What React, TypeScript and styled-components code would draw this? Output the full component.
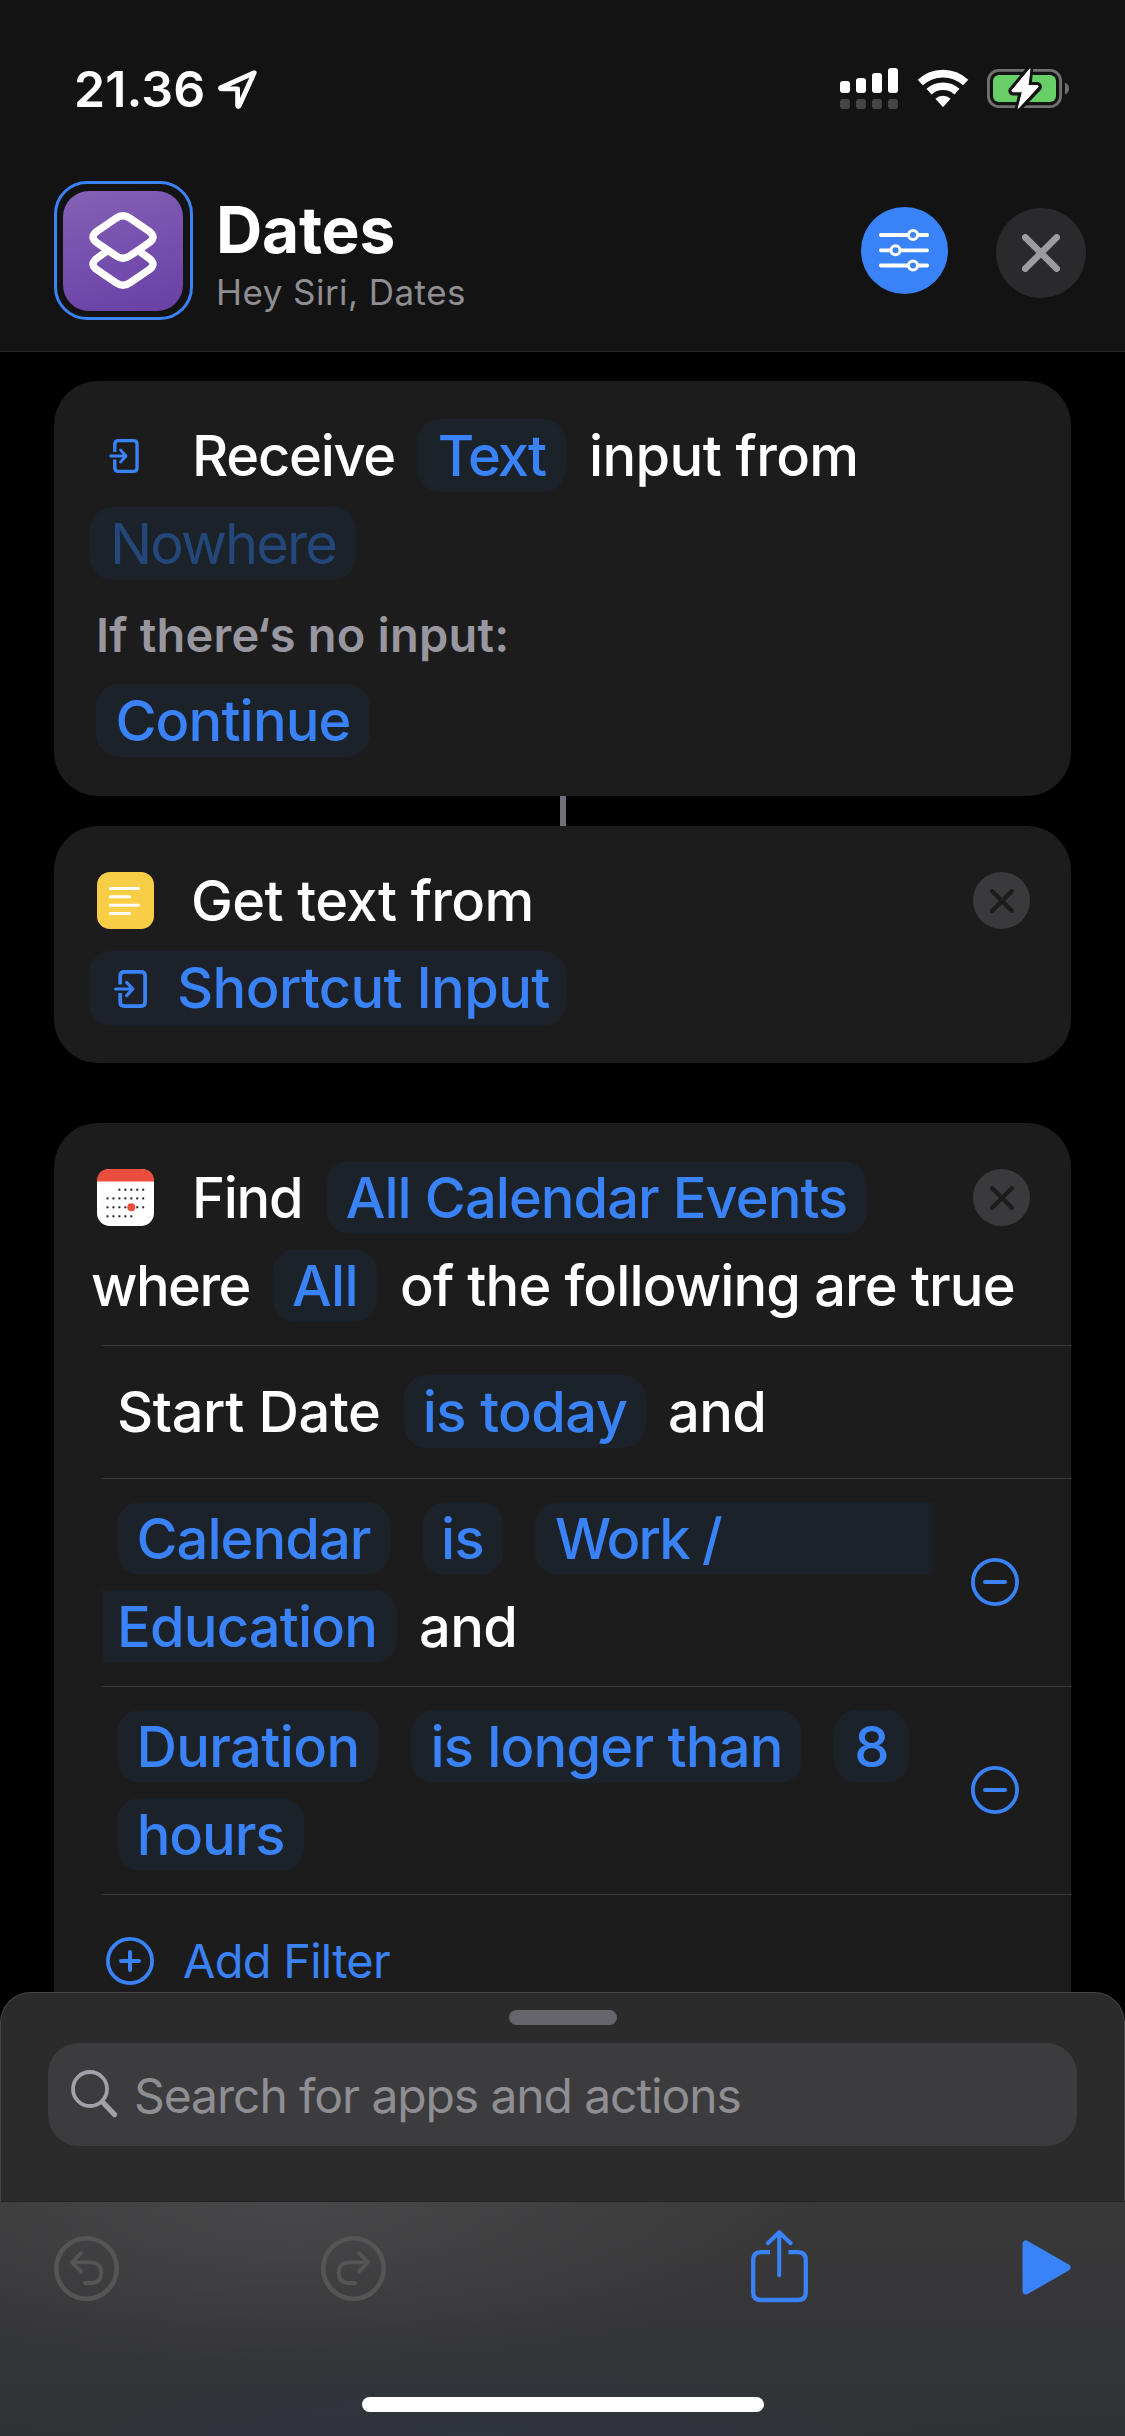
import React from "react";
import styled, { createGlobalStyle, css } from "styled-components";

const BLUE = "#3a82f7";
const PILL = "#1c222a";
const CARD = "#1c1c1c";

const Global = createGlobalStyle`
  *, *::before, *::after { box-sizing: border-box; }
  html, body { margin: 0; padding: 0; background: #000; }
  body { font-family: Inter, "Liberation Sans", sans-serif; color: #fff; }
  svg { display: block; flex: none; }
  button { border: 0; padding: 0; background: none; font: inherit; color: inherit; }
`;

const Phone = styled.div`
  width: 1125px;
  height: 2436px;
  display: flex;
  flex-direction: column;
  overflow: hidden;
  background: #000;
`;

/* ---------- header ---------- */

const Header = styled.header`
  flex: none;
  height: 352px;
  background: #131313;
  border-bottom: 1px solid #29292a;
`;

const StatusBar = styled.div`
  height: 181px;
  padding: 60px 56px 0 74px;
  display: flex;
  align-items: flex-start;
`;

const Clock = styled.div`
  width: 144px;
  height: 57px;
  font-size: 50px;
  line-height: 58px;
  font-weight: 600;
  letter-spacing: 0.1px;
  white-space: nowrap;
`;

const LocationSlot = styled.div`
  padding-top: 10px;
`;

const StatusIcons = styled.div`
  margin-left: auto;
  padding-top: 8px;
  display: flex;
`;

const TitleBar = styled.div`
  height: 139px;
  padding: 0 39px 0 54px;
  display: flex;
  align-items: flex-start;
`;

const AppIcon = styled.div`
  flex: none;
  width: 139px;
  height: 139px;
  border: 3px solid ${BLUE};
  border-radius: 33px;
  padding: 7px 0 0 6px;
`;

const AppIconFace = styled.div`
  width: 120px;
  height: 120px;
  border-radius: 26px;
  background: linear-gradient(165deg, #8461b5 0%, #7650ae 50%, #693fa5 100%);
`;

const Titles = styled.div`
  margin-left: 23px;
  white-space: nowrap;
`;

const Title = styled.h1`
  margin: 11px 0 0;
  font-size: 64px;
  line-height: 76px;
  font-weight: 700;
  letter-spacing: -0.2px;
`;

const Subtitle = styled.div`
  margin: 3px 0 0;
  font-size: 35px;
  line-height: 42px;
  color: #8e8e93;
  letter-spacing: 0.45px;
`;

const RoundButton = styled.button<{ $size: number; $bg: string; $mt?: number; $ml?: string }>`
  flex: none;
  width: ${(p) => p.$size}px;
  height: ${(p) => p.$size}px;
  margin-top: ${(p) => p.$mt ?? 0}px;
  margin-left: ${(p) => p.$ml ?? "0"};
  border-radius: 50%;
  background: ${(p) => p.$bg};
  display: flex;
  align-items: center;
  justify-content: center;
`;

/* ---------- editor ---------- */

const Editor = styled.main`
  flex: none;
  height: 1640px;
  padding: 29px 54px 0;
  overflow: hidden;
  display: flex;
  flex-direction: column;
`;

const Card = styled.section<{ $h: number; $mt?: number }>`
  flex: none;
  height: ${(p) => p.$h}px;
  margin-top: ${(p) => p.$mt ?? 0}px;
  padding-top: 38px;
  border-radius: 44px;
  background: ${CARD};
`;

const Connector = styled.div`
  flex: none;
  align-self: center;
  width: 6px;
  height: 30px;
  background: #6f717a;
`;

const Line = styled.div<{ $x: number; $mt?: number }>`
  display: flex;
  align-items: center;
  height: 73px;
  margin-top: ${(p) => p.$mt ?? 0}px;
  padding: 0 41px 0 ${(p) => p.$x}px;
`;

const wording = css`
  flex: none;
  height: 73px;
  font-size: 56px;
  line-height: 74px;
  font-weight: 500;
  letter-spacing: -0.6px;
  white-space: nowrap;
`;

const Words = styled.span<{ $w: number; $ml?: number; $ls?: number }>`
  ${wording}
  width: ${(p) => p.$w}px;
  margin-left: ${(p) => p.$ml ?? 0}px;
  letter-spacing: ${(p) => p.$ls ?? -0.6}px;
`;

type PillProps = { $w: number; $ml?: number; $dim?: boolean; $ls?: number; $open?: "left" | "right" };

const Pill = styled.span<PillProps>`
  ${wording}
  width: ${(p) => p.$w}px;
  margin-left: ${(p) => p.$ml ?? 0}px;
  border-radius: 23px;
  background: ${PILL};
  color: ${(p) => (p.$dim ? "#234779" : BLUE)};
  font-weight: ${(p) => (p.$dim ? 400 : 500)};
  letter-spacing: ${(p) => p.$ls ?? -0.6}px;
  text-align: center;
  ${(p) =>
    p.$open === "right" &&
    css`
      border-radius: 23px 0 0 23px;
      padding-left: 20px;
      text-align: left;
      background: linear-gradient(90deg, ${PILL} 0, ${PILL} calc(100% - 12px), ${CARD} 100%);
    `}
  ${(p) =>
    p.$open === "left" &&
    css`
      border-radius: 0 23px 23px 0;
      padding-left: 15px;
      text-align: left;
    `}
`;

const VariablePill = styled.span`
  flex: none;
  width: 477px;
  height: 75px;
  padding: 0 0 0 25px;
  border-radius: 22px;
  background: #1d2129;
  color: ${BLUE};
  display: flex;
  align-items: center;
`;

const VariableName = styled.span`
  ${wording}
  line-height: 72px;
  margin-left: 30px;
`;

const IconSlot = styled.span<{ $ml: number; $w: number }>`
  flex: none;
  margin-left: ${(p) => p.$ml}px;
  width: ${(p) => p.$w}px;
`;

const Question = styled.div`
  margin: 26px 0 21px 42px;
  height: 57px;
  font-size: 47px;
  line-height: 57px;
  font-weight: 600;
  color: #98969f;
  white-space: nowrap;
  letter-spacing: 0.2px;
`;

const Filters = styled.div`
  margin: 23px 0 0 48px;
`;

const Filter = styled.div<{ $h: number; $pt: number }>`
  height: ${(p) => p.$h}px;
  padding-top: ${(p) => p.$pt}px;
  border-top: 1px solid #3b3b3d;
  display: flex;
  align-items: flex-start;
`;

const FilterLines = styled.div`
  flex: none;
  width: 869px;
`;

const RemoveButton = styled.button`
  height: 48px;
  margin-top: 56px;
`;

const AddFilter = styled.button`
  display: flex;
  align-items: center;
  margin: 36px 0 0 4px;
  height: 60px;
  color: ${BLUE};
`;

const AddLabel = styled.span`
  margin-left: 29px;
  font-size: 47px;
  line-height: 58px;
  letter-spacing: -0.75px;
`;

/* ---------- bottom sheet ---------- */

const Sheet = styled.section`
  flex: none;
  height: 210px;
  border: 1px solid #474749;
  border-bottom-color: #232324;
  border-radius: 31px 31px 0 0;
  background: #2b2b2b;
  display: flex;
  flex-direction: column;
  align-items: center;
`;

const Grabber = styled.div`
  width: 108px;
  height: 15px;
  margin-top: 17px;
  border-radius: 8px;
  background: #66656b;
`;

const SearchField = styled.div`
  width: 1029px;
  height: 103px;
  margin-top: 18px;
  padding-left: 23px;
  border-radius: 31px;
  background: #3c3c3e;
  display: flex;
  align-items: center;
`;

const Placeholder = styled.span`
  margin: 2px 0 0 15px;
  font-size: 48px;
  line-height: 58px;
  letter-spacing: -1.1px;
  color: #8e8e93;
  white-space: nowrap;
`;

const Toolbar = styled.footer`
  flex: none;
  height: 234px;
  padding: 28px 54px 0;
  background:
    radial-gradient(ellipse 560px 100px at 42% 100%, rgba(47, 52, 64, 0.8), rgba(47, 52, 64, 0) 100%),
    radial-gradient(ellipse 520px 170px at 26% 0%, rgba(74, 74, 76, 0.85), rgba(74, 74, 76, 0) 100%),
    linear-gradient(180deg, #39393a 0%, #313234 100%);
  display: flex;
  flex-direction: column;
`;

const Tools = styled.div`
  height: 73px;
  display: flex;
  align-items: center;
`;

const Tool = styled.button<{ $ml?: number; $pt?: number }>`
  flex: none;
  margin-left: ${(p) => p.$ml ?? 0}px;
  padding-top: ${(p) => p.$pt ?? 0}px;
`;

const HomeIndicator = styled.div`
  align-self: center;
  width: 402px;
  height: 15px;
  margin-top: 94px;
  border-radius: 8px;
  background: #fff;
`;

/* ---------- icons ---------- */

const LocationIcon = () => (
  <svg width="40" height="40" viewBox="0 0 40 40">
    <path d="M36.2 2.8 2.8 17.7Q2 18.6 3.3 18.9H19.6V35.6Q20.2 37.2 21.2 35.8Z" fill="none" stroke="#fff" strokeWidth="4.8" strokeLinejoin="round" />
  </svg>
);

const signal = [12, 15, 20, 25];

const SignalIcon = () => (
  <svg width="77" height="42" viewBox="0 0 77 42">
    {signal.map((h, i) => (
      <g key={h}>
        <rect x={i * 16} y={25 - h} width="10" height={h} rx="3" fill="#fff" />
        <rect x={i * 16} y="31" width="10" height="10" rx="3" fill="#454545" />
      </g>
    ))}
  </svg>
);

const WifiIcon = () => (
  <svg width="70" height="40" viewBox="0 -2 70 40">
    <g fill="none" stroke="#fff" strokeWidth="7.6">
      <path d="M3.3 12.6A33.2 33.2 0 0 1 48.7 12.6" />
      <path d="M12 21.6A20.8 20.8 0 0 1 40 21.6" />
    </g>
    <path d="M18.4 28.8A11.3 11.3 0 0 1 33.6 28.8L26.6 36.4Q26 37 25.4 36.4Z" fill="#fff" />
  </svg>
);

const BatteryIcon = () => (
  <svg width="82" height="42" viewBox="0 0 82 42">
    <rect x="1.4" y="2.4" width="72.2" height="36.2" rx="10.5" fill="none" stroke="#707070" strokeWidth="2.8" />
    <rect x="6" y="7" width="63" height="27" rx="6" fill="#68ce67" />
    <path d="M78 14.5Q82 16.5 82 20.5T78 26.5Z" fill="#707070" />
    <path d="M43 .5 24.6 22.5Q24.4 24 26 24.2H35L31 41 51.4 19.8Q52 18 50.4 17.2H41.4Z" fill="#fff" stroke="#131313" strokeWidth="6.5" strokeLinejoin="round" />
    <path d="M43 .8 25 22.4Q24.6 23.6 26 23.8H35.4L31.2 40.4 51 19Q51.6 17.8 50.4 17.6H41Z" fill="#fff" stroke="#fff" strokeWidth="1" strokeLinejoin="round" />
  </svg>
);

const ShortcutsGlyph = () => (
  <svg width="120" height="120" viewBox="0 0 120 120" fill="none" stroke="#fff" strokeWidth="7.4">
    <path d="M53 27.2Q60 22.2 67 27.2L86 40.2Q94 46 86 51.8L67 64.8Q60 69.8 53 64.8L34 51.8Q26 46 34 40.2Z" />
    <path d="M43 60.8 34 67.2Q26 73 34 78.8L53 91.8Q60 96.8 67 91.8L86 78.8Q94 73 86 67.2L77 60.8" />
  </svg>
);

const sliders = [
  { y: 6, x: 34 },
  { y: 21.3, x: 16.5 },
  { y: 36.5, x: 34 },
];

const SlidersIcon = () => (
  <svg width="51" height="43" viewBox="0 0 51 43">
    {sliders.map((s) => (
      <g key={s.y} stroke="#fff" strokeLinecap="round">
        <path d={`M1.8 ${s.y}H48.2`} strokeWidth="3.8" />
        <circle cx={s.x} cy={s.y} r="4.5" fill={BLUE} strokeWidth="3" />
      </g>
    ))}
  </svg>
);

const CrossIcon = ({ size, width, color }: { size: number; width: number; color: string }) => {
  const a = width / 2;
  const b = size - a;
  return (
    <svg width={size} height={size}>
      <path d={`M${a} ${a}L${b} ${b}M${b} ${a}L${a} ${b}`} stroke={color} strokeWidth={width} strokeLinecap="round" />
    </svg>
  );
};

const InputIcon = ({ width, height }: { width: number; height: number }) => (
  <svg width={width} height={height} viewBox="0 0 33 38" fill="none" stroke={BLUE} strokeWidth="3.7">
    <path d="M6.2 14.6V6Q6.2 1.9 10.3 1.9H27Q31.1 1.9 31.1 6V32Q31.1 36.1 27 36.1H10.3Q6.2 36.1 6.2 32V23" />
    <path d="M1.6 19H18.4M12.6 12.4 18.8 19 12.6 25.6" strokeWidth="3.2" strokeLinecap="round" strokeLinejoin="round" />
  </svg>
);

const TextIcon = () => (
  <svg width="57" height="57" viewBox="0 0 57 57">
    <rect width="57" height="57" rx="13" fill="#f7ce46" />
    <path d="M13.3 16.5H41.4M13.3 24.7H32.6M13.3 33.2H41.4M13.3 41.6H32.6" stroke="#fff" strokeWidth="3" strokeLinecap="round" />
  </svg>
);

const weeks = [
  { y: 20.7, from: 2, to: 6 },
  { y: 29.4, from: 0, to: 6 },
  { y: 38.3, from: 0, to: 6 },
  { y: 47.3, from: 0, to: 4 },
];

const CalendarIcon = () => (
  <svg width="57" height="57" viewBox="0 0 57 57">
    <rect width="57" height="57" rx="13" fill="#fff" />
    <path d="M0 12.6Q0 0 13 0H44Q57 0 57 12.6Z" fill="#eb4e3d" />
    {weeks.map((w) =>
      Array.from({ length: w.to - w.from + 1 }, (_, i) => (
        <rect key={`${w.y}-${i}`} x={9.5 + (w.from + i) * 5.95} y={w.y - 1} width="2" height="2" fill="#222" />
      ))
    )}
    <circle cx="34.3" cy="38.3" r="4" fill="#eb4e3d" />
  </svg>
);

const CircleSign = ({ plus }: { plus?: boolean }) => (
  <svg width="48" height="48" viewBox="0 0 48 48" fill="none" stroke={BLUE} strokeLinecap="round">
    <circle cx="24" cy="24" r="22.1" strokeWidth="3.8" />
    <path d={plus ? "M15 24H33M24 15V33" : "M14 24H34"} strokeWidth="4" />
  </svg>
);

const SearchIcon = () => (
  <svg width="48" height="50" viewBox="0 0 48 50" fill="none" stroke="#a2a1a8" strokeLinecap="round">
    <circle cx="19" cy="19" r="17" strokeWidth="3.8" />
    <path d="M31.3 31.8 43.6 44.6" strokeWidth="5.2" />
  </svg>
);

const HistoryIcon = ({ flip }: { flip?: boolean }) => (
  <svg width="65" height="65" viewBox="0 0 65 65" fill="none" stroke="#555556" strokeLinecap="round" strokeLinejoin="round">
    <circle cx="32.5" cy="32.5" r="30.2" strokeWidth="4.6" />
    <path transform={flip ? "translate(65 0) scale(-1 1)" : undefined} d="M27 17.2 18 26.4 27 35.6M18.6 26.4H36.6Q47.2 26.4 47.2 36.7T36.6 47H31" strokeWidth="3.9" />
  </svg>
);

const ShareIcon = () => (
  <svg width="57" height="73" viewBox="0 0 57 73" fill="none" stroke={BLUE} strokeWidth="4.3">
    <path d="M19 22.2H10.2Q2.2 22.2 2.2 30.2V62.4Q2.2 70 10.2 70H46.8Q54.8 70 54.8 62.4V30.2Q54.8 22.2 46.8 22.2H37.4" />
    <path d="M28.2 2.8V45.2M16.8 13.2 28.2 2.2 39.6 13.2" strokeWidth="4" strokeLinecap="round" strokeLinejoin="round" />
  </svg>
);

const PlayIcon = () => (
  <svg width="49" height="55" viewBox="0 0 49 55">
    <path d="M4 4V51L45 27.5Z" fill={BLUE} stroke={BLUE} strokeWidth="7" strokeLinejoin="round" />
  </svg>
);

/* ---------- screen ---------- */

const DeleteAction = () => (
  <RoundButton $size={57} $bg="#3a3a3c" $ml="auto" aria-label="Remove action">
    <CrossIcon size={24} width={4.4} color={CARD} />
  </RoundButton>
);

const RemoveFilter = () => (
  <RemoveButton aria-label="Remove filter">
    <CircleSign />
  </RemoveButton>
);

export default function App() {
  return (
    <Phone>
      <Global />
      <Header>
        <StatusBar>
          <Clock>21.36</Clock>
          <LocationSlot>
            <LocationIcon />
          </LocationSlot>
          <StatusIcons>
            <SignalIcon />
            <WifiIcon />
            <BatteryIcon />
          </StatusIcons>
        </StatusBar>
        <TitleBar>
          <AppIcon>
            <AppIconFace>
              <ShortcutsGlyph />
            </AppIconFace>
          </AppIcon>
          <Titles>
            <Title>Dates</Title>
            <Subtitle>Hey Siri, Dates</Subtitle>
          </Titles>
          <RoundButton $size={87} $bg={BLUE} $mt={26} $ml="auto" aria-label="Settings">
            <SlidersIcon />
          </RoundButton>
          <RoundButton $size={90} $bg="#2a2a2c" $mt={27} $ml="48px" aria-label="Close">
            <CrossIcon size={38} width={6.6} color="#9c9ba2" />
          </RoundButton>
        </TitleBar>
      </Header>

      <Editor>
        <Card $h={415}>
          <Line $x={36}>
            <IconSlot $ml={19} $w={83}>
              <InputIcon width={30} height={34} />
            </IconSlot>
            <Words $w={225} $ls={-1.25}>Receive</Words>
            <Pill $w={149} $ls={-1.9}>Text</Pill>
            <Words $w={290} $ml={23} $ls={-0.6}>input from</Words>
          </Line>
          <Line $x={36} $mt={15}>
            <Pill $w={266} $dim $ls={-1.9}>Nowhere</Pill>
          </Line>
          <Question>If there‘s no input:</Question>
          <Line $x={42}>
            <Pill $w={274} $ls={-0.85}>Continue</Pill>
          </Line>
        </Card>
        <Connector />
        <Card $h={237}>
          <Line $x={36}>
            <IconSlot $ml={7} $w={94}>
              <TextIcon />
            </IconSlot>
            <Words $w={400}>Get text from</Words>
            <DeleteAction />
          </Line>
          <Line $x={35} $mt={15}>
            <VariablePill>
              <InputIcon width={33} height={38} />
              <VariableName>Shortcut Input</VariableName>
            </VariablePill>
          </Line>
        </Card>

        <Card $h={920} $mt={60}>
          <Line $x={36}>
            <IconSlot $ml={7} $w={95}>
              <CalendarIcon />
            </IconSlot>
            <Words $w={134} $ls={-1.3}>Find</Words>
            <Pill $w={541} $ls={-0.95}>All Calendar Events</Pill>
            <DeleteAction />
          </Line>
          <Line $x={37} $mt={15}>
            <Words $w={182} $ls={-1.5}>where</Words>
            <Pill $w={104}>All</Pill>
            <Words $w={620} $ml={23} $ls={-0.88}>of the following are true</Words>
          </Line>
          <Filters>
            <Filter $h={133} $pt={29}>
              <FilterLines>
                <Line $x={15}>
                  <Words $w={287} $ls={-0.4}>Start Date</Words>
                  <Pill $w={242}>is today</Pill>
                  <Words $w={110} $ml={22}>and</Words>
                </Line>
              </FilterLines>
            </Filter>
            <Filter $h={208} $pt={23}>
              <FilterLines>
                <Line $x={15}>
                  <Pill $w={273} $ls={-0.95}>Calendar</Pill>
                  <Pill $w={81} $ml={32}>is</Pill>
                  <Pill $w={403} $ml={32} $ls={-1.8} $open="right">Work /</Pill>
                </Line>
                <Line $x={0} $mt={15}>
                  <Pill $w={295} $ls={-0.8} $open="left">Education</Pill>
                  <Words $w={110} $ml={22}>and</Words>
                </Line>
              </FilterLines>
              <RemoveFilter />
            </Filter>
            <Filter $h={208} $pt={23}>
              <FilterLines>
                <Line $x={15}>
                  <Pill $w={262}>Duration</Pill>
                  <Pill $w={391} $ml={32} $ls={-0.8}>is longer than</Pill>
                  <Pill $w={75} $ml={32}>8</Pill>
                </Line>
                <Line $x={15} $mt={15}>
                  <Pill $w={187} $ls={-1.1}>hours</Pill>
                </Line>
              </FilterLines>
              <RemoveFilter />
            </Filter>
            <Filter $h={110} $pt={0}>
              <AddFilter>
                <CircleSign plus />
                <AddLabel>Add Filter</AddLabel>
              </AddFilter>
            </Filter>
          </Filters>
        </Card>
      </Editor>

      <Sheet>
        <Grabber />
        <SearchField>
          <SearchIcon />
          <Placeholder>Search for apps and actions</Placeholder>
        </SearchField>
      </Sheet>
      <Toolbar>
        <Tools>
          <Tool $pt={3} aria-label="Undo">
            <HistoryIcon />
          </Tool>
          <Tool $ml={202} $pt={3} aria-label="Redo">
            <HistoryIcon flip />
          </Tool>
          <Tool $ml={365} aria-label="Share">
            <ShareIcon />
          </Tool>
          <Tool $ml={214} $pt={2} aria-label="Run">
            <PlayIcon />
          </Tool>
        </Tools>
        <HomeIndicator />
      </Toolbar>
    </Phone>
  );
}
